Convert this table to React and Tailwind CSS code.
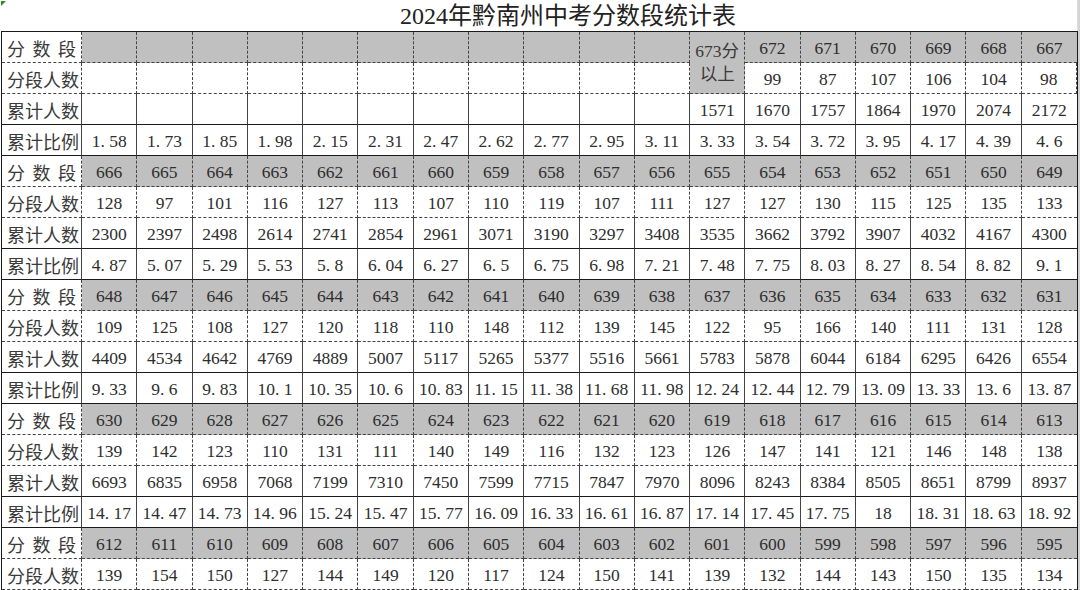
import React from "react";

const seq = (a, n) => Array.from({ length: n }, (_, i) => String(a - i));

const rows = [
  { label: "分 数 段", gray: true, cells: [...Array(11).fill(""), { merged: "673分以上" }, "672", "671", "670", "669", "668", "667"] },
  { label: "分段人数", cells: [...Array(11).fill(""), "99", "87", "107", "106", "104", "98"] },
  { label: "累计人数", cells: [...Array(11).fill(""), "1571", "1670", "1757", "1864", "1970", "2074", "2172"] },
  { label: "累计比例", cells: "1.58 1.73 1.85 1.98 2.15 2.31 2.47 2.62 2.77 2.95 3.11 3.33 3.54 3.72 3.95 4.17 4.39 4.6".split(" ") },
  { label: "分 数 段", gray: true, cells: seq(666, 18) },
  { label: "分段人数", cells: "128 97 101 116 127 113 107 110 119 107 111 127 127 130 115 125 135 133".split(" ") },
  { label: "累计人数", cells: "2300 2397 2498 2614 2741 2854 2961 3071 3190 3297 3408 3535 3662 3792 3907 4032 4167 4300".split(" ") },
  { label: "累计比例", cells: "4.87 5.07 5.29 5.53 5.8 6.04 6.27 6.5 6.75 6.98 7.21 7.48 7.75 8.03 8.27 8.54 8.82 9.1".split(" ") },
  { label: "分 数 段", gray: true, cells: seq(648, 18) },
  { label: "分段人数", cells: "109 125 108 127 120 118 110 148 112 139 145 122 95 166 140 111 131 128".split(" ") },
  { label: "累计人数", cells: "4409 4534 4642 4769 4889 5007 5117 5265 5377 5516 5661 5783 5878 6044 6184 6295 6426 6554".split(" ") },
  { label: "累计比例", cells: "9.33 9.6 9.83 10.1 10.35 10.6 10.83 11.15 11.38 11.68 11.98 12.24 12.44 12.79 13.09 13.33 13.6 13.87".split(" ") },
  { label: "分 数 段", gray: true, cells: seq(630, 18) },
  { label: "分段人数", cells: "139 142 123 110 131 111 140 149 116 132 123 126 147 141 121 146 148 138".split(" ") },
  { label: "累计人数", cells: "6693 6835 6958 7068 7199 7310 7450 7599 7715 7847 7970 8096 8243 8384 8505 8651 8799 8937".split(" ") },
  { label: "累计比例", cells: "14.17 14.47 14.73 14.96 15.24 15.47 15.77 16.09 16.33 16.61 16.87 17.14 17.45 17.75 18 18.31 18.63 18.92".split(" ") },
  { label: "分 数 段", gray: true, cells: seq(612, 18) },
  { label: "分段人数", cells: "139 154 150 127 144 149 120 117 124 150 141 139 132 144 143 150 135 134".split(" ") },
];

function Num({ v }) {
  if (!v.includes(".")) return <>{v}</>;
  const [a, b] = v.split(".");
  return (
    <>
      {a}
      <span className="inline-block w-[0.5em] text-left">.</span>
      {b}
    </>
  );
}

export default function App() {
  const cells = [];
  rows.forEach((row, r) => {
    const solidBottom = r % 4 === 2 || r % 4 === 3;
    const bb = solidBottom ? "border-b border-solid border-b-[#1a1a1a]" : "border-b border-dashed border-b-[#444]";
    cells.push(
      <div
        key={`l${r}`}
        className={`h-[31px] flex items-center justify-between px-[5px] pt-[2px] text-[18px] text-[#3a3a3a] font-['Noto_Sans_CJK_SC',sans-serif] border-r border-dashed border-r-[#444] ${bb}`}
      >
        {row.label.replace(/ /g, "").split("").map((c, i) => (
          <span key={i}>{c}</span>
        ))}
      </div>
    );
    row.cells.forEach((c, ci) => {
      const last = ci === 17;
      const br = last ? "border-r-0" : "border-r border-dashed border-r-[#444]";
      if (c && typeof c === "object") {
        cells.push(
          <div
            key={`c${r}-${ci}`}
            className={`row-span-2 h-[62px] flex items-center justify-center text-center px-[3px] pt-[1px] leading-[23px] bg-[#c0c0c0] text-[#3a3a3a] ${br} border-b border-dashed border-b-[#444]`}
          >
            {c.merged}
          </div>
        );
        return;
      }
      cells.push(
        <div
          key={`c${r}-${ci}`}
          className={`h-[31px] flex items-center justify-center pt-[3px] whitespace-nowrap ${row.gray ? "bg-[#c0c0c0]" : "bg-white"} ${br} ${bb}`}
        >
          {c ? <Num v={c} /> : null}
        </div>
      );
    });
  });

  return (
    <div className="relative w-[1080px] h-[590px] overflow-hidden bg-white flex">
      <div className="w-[1078px] flex flex-col">
        <div className="h-[2px] bg-[#e4e4e4]" />
        <div className="h-[31px] flex items-center pl-[400px] pt-[1px] text-[24px] text-[#222] font-['Liberation_Serif','Noto_Sans_CJK_SC',serif] border-r border-r-[#dcdcdc]">
          2024年黔南州中考分数段统计表
        </div>
        <div className="ml-[1px] w-[1077px] border-t border-l border-r border-solid border-[#1a1a1a] grid grid-cols-[80px_repeat(18,minmax(0,1fr))] text-[17.5px] text-[#2e2e2e] font-['Liberation_Serif','Noto_Sans_CJK_SC',serif]">
          {cells}
        </div>
      </div>
      <div className="w-[2px] bg-[#d4d4d4]" />
      <div className="absolute left-[1px] top-[1px] w-0 h-0 border-t-[5px] border-t-[#2e8b2e] border-r-[5px] border-r-transparent" />
    </div>
  );
}
